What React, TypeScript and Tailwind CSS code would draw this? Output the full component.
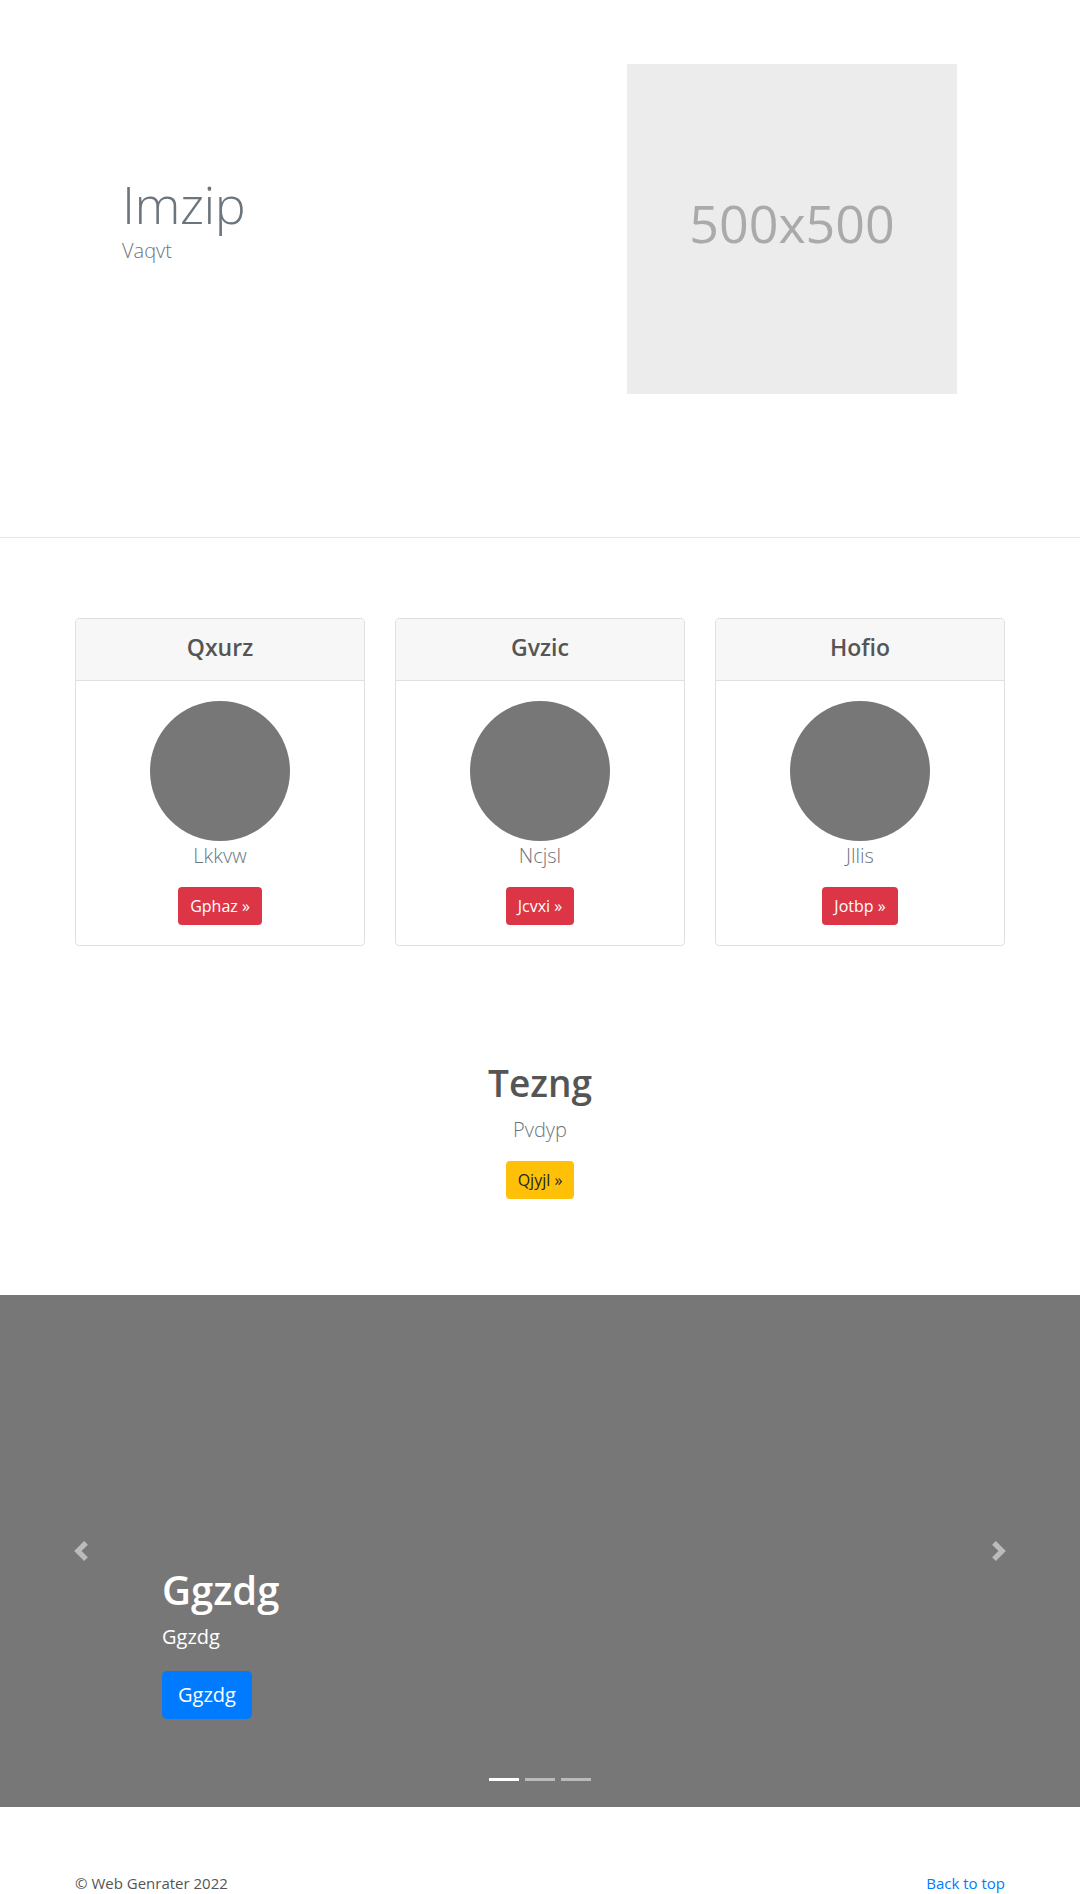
import React from "react";

const font = { fontFamily: '"Open Sans", "Noto Sans", sans-serif' };

const cards = [
  { titulo: "Qxurz", texto: "Lkkvw", botao: "Gphaz" },
  { titulo: "Gvzic", texto: "Ncjsl", botao: "Jcvxi" },
  { titulo: "Hofio", texto: "Jllis", botao: "Jotbp" },
];

function Card({ titulo, texto, botao }: { titulo: string; texto: string; botao: string }) {
  return (
    <div className="border border-[#dfdfdf] rounded-[4px] overflow-hidden">
      <div className="h-[62px] flex items-center justify-center bg-[#f7f7f7] border-b border-[#dfdfdf] pb-[3px]">
        <h4 className="text-[23px] font-semibold text-[#555] leading-[1.2]">{titulo}</h4>
      </div>
      <div className="p-5 flex flex-col items-center">
        <div className="w-[140px] h-[140px] rounded-full bg-[#777]" />
        <p className="text-[20px] font-light leading-[30px] text-[#6c757d] mb-4">{texto}</p>
        <a className="h-[38px] px-3 flex items-center rounded-[4px] bg-[#dc3545] text-white text-[16px]">
          {botao} »
        </a>
      </div>
    </div>
  );
}

export default function App() {
  return (
    <div className="bg-white min-h-screen" style={font}>
      {/* hero */}
      <section className="pt-16 pb-[143px] border-b border-[#e5e5e5]">
        <div className="w-[960px] mx-auto flex">
          <div className="w-1/2 pl-[62px] pt-[107px]">
            <h1 className="text-[52px] font-light leading-[65px] tracking-[-0.5px] text-[#6c757d]">Imzip</h1>
            <p className="text-[20px] font-light leading-[30px] text-[#6c757d]">Vaqvt</p>
          </div>
          <div className="w-1/2 pl-[87px]">
            <div className="w-[330px] h-[330px] bg-[#ececec] flex items-center justify-center pb-3">
              <span className="text-[52px] text-[#aaa]">500x500</span>
            </div>
          </div>
        </div>
      </section>

      {/* cards */}
      <section className="pt-20">
        <div className="w-[960px] mx-auto px-[15px] grid grid-cols-3 gap-[30px]">
          {cards.map((c) => (
            <Card key={c.titulo} {...c} />
          ))}
        </div>
      </section>

      {/* chamada */}
      <section className="pt-[113px] pb-24 flex flex-col items-center">
        <h1 className="text-[37px] font-semibold leading-[48px] text-[#555] mb-2">Tezng</h1>
        <p className="text-[20px] font-light leading-[30px] text-[#6c757d] mb-4">Pvdyp</p>
        <a className="h-[38px] px-3 flex items-center rounded-[4px] bg-[#ffc107] text-[#212529] text-[16px]">
          Qjyjl »
        </a>
      </section>

      {/* carousel */}
      <section className="relative h-[512px] bg-[#777] flex items-end pl-[162px] pb-[88px]">
        <div className="text-white">
          <h1 className="text-[40px] font-semibold leading-[48px]">Ggzdg</h1>
          <p className="text-[20px] leading-[30px] mt-2 mb-[19px]">Ggzdg</p>
          <a className="inline-flex h-[48px] px-4 items-center rounded-[5px] bg-[#007bff] text-[20px] text-white">
            Ggzdg
          </a>
        </div>

        <svg className="absolute left-[71px] top-[246px] w-5 h-5 opacity-50" viewBox="0 0 8 8" fill="#fff">
          <path d="M5.25 0l-4 4 4 4 1.5-1.5-2.5-2.5 2.5-2.5-1.5-1.5z" />
        </svg>
        <svg className="absolute right-[71px] top-[246px] w-5 h-5 opacity-50" viewBox="0 0 8 8" fill="#fff">
          <path d="M2.75 0l-1.5 1.5 2.5 2.5-2.5 2.5 1.5 1.5 4-4-4-4z" />
        </svg>

        <div className="absolute bottom-[26px] left-0 right-0 flex justify-center gap-[6px]">
          <span className="w-[30px] h-[3px] bg-white" />
          <span className="w-[30px] h-[3px] bg-white opacity-50" />
          <span className="w-[30px] h-[3px] bg-white opacity-50" />
        </div>
      </section>

      {/* rodape */}
      <footer className="pt-16 pb-10">
        <div className="w-[960px] mx-auto px-[15px] flex justify-between text-[15px] leading-6">
          <p className="text-[#555]">© Web Genrater 2022</p>
          <a className="text-[#007bff]">Back to top</a>
        </div>
      </footer>
    </div>
  );
}
